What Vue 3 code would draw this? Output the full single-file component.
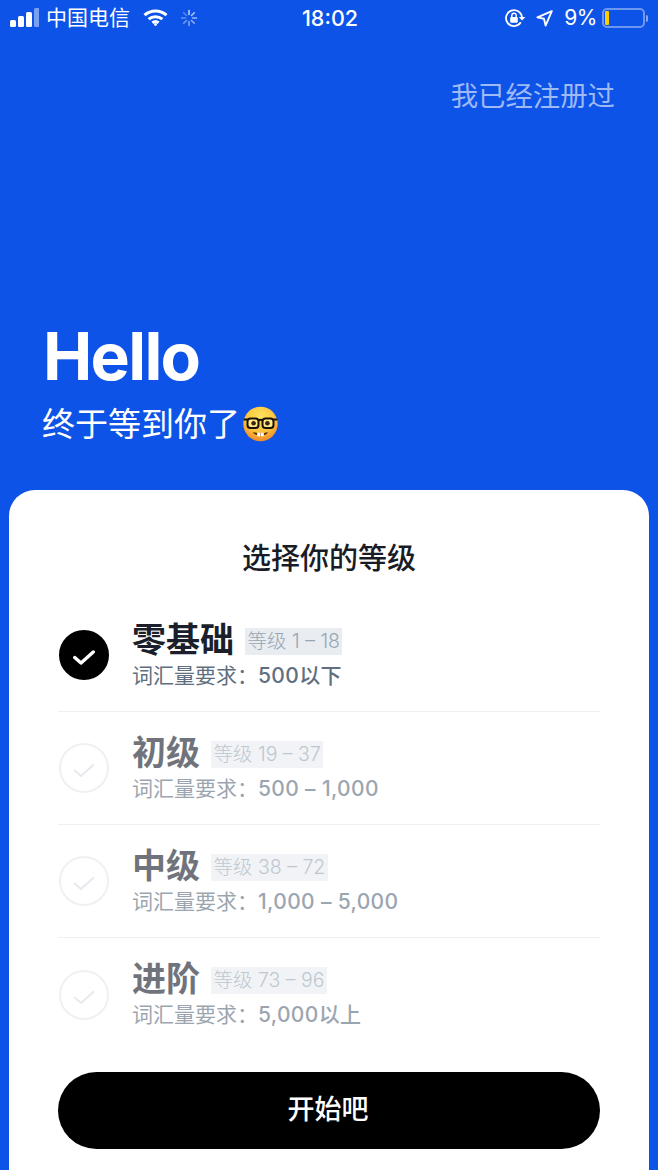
<script setup>
const levels = [
  { name: '零基础', range: '等级 1 – 18', need: '500以下', active: true },
  { name: '初级', range: '等级 19 – 37', need: '500 – 1,000', active: false },
  { name: '中级', range: '等级 38 – 72', need: '1,000 – 5,000', active: false },
  { name: '进阶', range: '等级 73 – 96', need: '5,000以上', active: false }
]
const spokes = [0, 45, 90, 135, 180, 225, 270, 315]
</script>

<template>
  <div class="page">
    <header class="status">
      <div class="status-left">
        <svg class="signal" width="29" height="20" viewBox="0 0 29 20" fill="#fff">
          <rect x="0" y="12" width="6" height="7" rx="1.5" />
          <rect x="8" y="8" width="6" height="11" rx="1.5" />
          <rect x="16" y="4" width="6" height="15" rx="1.5" />
          <rect x="24" y="0" width="5.5" height="19" rx="1.5" opacity=".45" />
        </svg>
        <span class="carrier">中国电信</span>
        <svg class="wifi" width="25" height="18" viewBox="0 0 25 18" fill="none" stroke="#fff" stroke-width="3">
          <path d="M1.5 6.2C7.6.6 17.4.6 23.5 6.2" />
          <path d="M5.6 10.2c3.9-3.4 9.9-3.4 13.8 0" />
          <path d="M9.4 13.8c1.8-1.4 4.4-1.4 6.2 0" />
          <circle cx="12.5" cy="15.6" r="1.4" fill="#fff" stroke="none" />
        </svg>
        <svg class="spin" width="18" height="18" viewBox="0 0 18 18" stroke="#fff" stroke-width="1.6" stroke-linecap="round">
          <line
            v-for="(a, i) in spokes"
            :key="a"
            x1="9" y1="1.5" x2="9" y2="5.5"
            :transform="`rotate(${a} 9 9)`"
            :opacity="1 - i * 0.08"
          />
        </svg>
      </div>
      <div class="time">18:02</div>
      <div class="status-right">
        <svg width="21" height="18" viewBox="0 0 21 18" fill="none">
          <path d="M15.800 13.300A8 8 0 1 1 17 9" stroke="#fff" stroke-width="1.8" />
          <path d="M13.800 8h6.600l-3.300 3.500z" fill="#fff" />
          <rect x="5.200" y="8" width="7.600" height="5.800" rx="1" fill="#fff" />
          <path d="M6.800 8V6.400a2.200 2.200 0 0 1 4.400 0V8" stroke="#fff" stroke-width="1.400" />
        </svg>
        <svg class="loc" width="17" height="17" viewBox="0 0 17 17" fill="none">
          <path d="M15.800 1.200 1.400 7.400l6.600 1.400 1.600 6.800z" stroke="#fff" stroke-width="1.900" stroke-linejoin="round" />
        </svg>
        <span class="pct">9%</span>
        <div class="battery">
          <div class="battery-body"><span class="battery-fill"></span></div>
          <span class="battery-tip"></span>
        </div>
      </div>
    </header>

    <div class="login-row"><span class="login">我已经注册过</span></div>

    <section class="hero">
      <h1 class="hello">Hello</h1>
      <div class="welcome">
        <span>终于等到你了</span>
        <svg class="emoji" width="35" height="36" viewBox="0 0 35 36">
          <defs>
            <radialGradient id="face" cx="50%" cy="30%" r="72%">
              <stop offset="0%" stop-color="#ffe45c" />
              <stop offset="60%" stop-color="#fcc23e" />
              <stop offset="100%" stop-color="#ee8428" />
            </radialGradient>
          </defs>
          <circle cx="17.500" cy="18" r="17.200" fill="url(#face)" />
          <rect x="4.500" y="12.500" width="11" height="9.500" rx="3" fill="#ffe987" stroke="#16110a" stroke-width="2" />
          <rect x="19.500" y="12.500" width="11" height="9.500" rx="3" fill="#ffe987" stroke="#16110a" stroke-width="2" />
          <path d="M.8 13.500h3.700M30.500 13.500h3.700M15.500 14.500c1.300-1 2.700-1 4 0" stroke="#16110a" stroke-width="2" fill="none" />
          <circle cx="10.600" cy="17.200" r="2.300" fill="#3a2510" />
          <circle cx="24.400" cy="17.200" r="2.300" fill="#3a2510" />
          <path d="M10 26c4.500 1.800 10.500 1.800 15 0-1.400 4.800-13.600 4.800-15 0z" fill="#5d2c10" />
          <rect x="14.200" y="26.800" width="3.100" height="3.400" rx=".6" fill="#fff" />
          <rect x="17.700" y="26.800" width="3.100" height="3.400" rx=".6" fill="#fff" />
        </svg>
      </div>
    </section>

    <main class="card">
      <h2 class="card-title">选择你的等级</h2>
      <ul class="levels">
        <li v-for="item in levels" :key="item.name" class="level">
          <span class="check" :class="{ on: item.active }">
            <svg width="24" height="20" viewBox="0 0 24 20" fill="none">
              <path d="M2.750 12.500 9 18 21.250 7" :stroke="item.active ? '#fff' : '#e6eaee'" :stroke-width="item.active ? 3.400 : 2" stroke-linecap="round" stroke-linejoin="round" />
            </svg>
          </span>
          <div class="info" :class="{ dim: !item.active }">
            <div class="head">
              <span class="name">{{ item.name }}</span>
              <span class="range">{{ item.range }}</span>
            </div>
            <div class="need">词汇量要求：<span class="need-value">{{ item.need }}</span></div>
          </div>
        </li>
      </ul>
      <button class="start">开始吧</button>
    </main>
  </div>
</template>

<style>
html, body { margin: 0; padding: 0; }
</style>

<style scoped>
.page {
  width: 658px;
  height: 1170px;
  overflow: hidden;
  background: #0e53e7;
  display: flex;
  flex-direction: column;
  font-family: Inter, "Noto Sans CJK SC", sans-serif;
  color: #fff;
}
.status {
  height: 36px;
  padding: 0 10px;
  display: grid;
  grid-template-columns: 1fr auto 1fr;
  align-items: center;
}
.status-left, .status-right { display: flex; align-items: center; }
.status-right { justify-content: flex-end; }
.carrier { font-size: 21px; line-height: 36px; margin-left: 7px; width: 84px; white-space: nowrap; }
.wifi { margin-left: 13px; }
.spin { margin-left: 12px; opacity: .7; }
.time { font-size: 21.500px; font-weight: 500; line-height: 36px; padding-left: 2px; }
.loc { margin-left: 10px; }
.pct { font-size: 21px; line-height: 36px; margin-left: 11px; letter-spacing: -.5px; }
.battery { display: flex; align-items: center; margin-left: 5px; }
.battery-body {
  width: 43px;
  height: 20px;
  box-sizing: border-box;
  border: 2px solid rgba(255, 255, 255, .4);
  border-radius: 5px;
  padding: 1px;
}
.battery-fill { display: block; width: 4px; height: 100%; background: #ffcc00; border-radius: 1px; }
.battery-tip { width: 2px; height: 7px; margin-left: 1px; background: rgba(255, 255, 255, .5); border-radius: 0 2px 2px 0; }
.login-row { display: flex; justify-content: flex-end; padding: 41px 43px 0 0; }
.login { font-size: 27.400px; line-height: 38px; color: #9dbaf6; white-space: nowrap; }
.hero { margin-top: 206px; padding-left: 43px; }
.hello {
  margin: 0;
  font-size: 66px;
  font-weight: 700;
  line-height: 70px;
  letter-spacing: -1.700px;
}
.welcome { display: flex; align-items: center; margin-top: 13px; height: 40px; font-size: 33px; line-height: 40px; margin-left: -1px; }
.emoji { margin-left: 3px; }
.card {
  margin: 46px 9px 0;
  flex: 1;
  padding: 49px 49px 0;
  background: #fff;
  border-radius: 26px 26px 0 0;
}
.card-title {
  margin: 0 0 20px;
  text-align: center;
  font-size: 29px;
  font-weight: 500;
  line-height: 40px;
  color: #181c26;
}
.levels { list-style: none; margin: 0; padding: 0; }
.level {
  height: 113px;
  box-sizing: border-box;
  display: flex;
  align-items: center;
  border-bottom: 1px solid #eef0f2;
}
.level:last-child { border-bottom: 0; }
.check {
  width: 50px;
  height: 50px;
  margin-left: 1px;
  box-sizing: border-box;
  border: 2px solid #eef1f4;
  border-radius: 50%;
  display: flex;
  align-items: center;
  justify-content: center;
}
.check.on { background: #000; border-color: #000; }
.info { margin-left: 23px; }
.info.dim { opacity: .62; }
.head { display: flex; align-items: center; height: 40px; }
.name { font-size: 34px; font-weight: 700; line-height: 40px; color: #1a1f2b; }
.range {
  margin-left: 11px;
  padding: 0 2.500px;
  height: 27px;
  margin-top: 3px;
  font-size: 19.500px;
  font-weight: 300;
  line-height: 26px;
  background: #e9edf1;
  color: #97a6b4;
  white-space: nowrap;
}
.need { font-size: 21px; font-weight: 400; line-height: 30px; margin-top: 1px; color: #5f6f7f; white-space: nowrap; }
.need-value { font-weight: 500; letter-spacing: .35px; }
.start {
  display: block;
  width: 100%;
  height: 77px;
  margin-top: 21px;
  padding: 0 2px 7px 0;
  border: 0;
  border-radius: 38.500px;
  background: #000;
  color: #fff;
  font-family: inherit;
  font-size: 27px;
  font-weight: 500;
}
</style>
